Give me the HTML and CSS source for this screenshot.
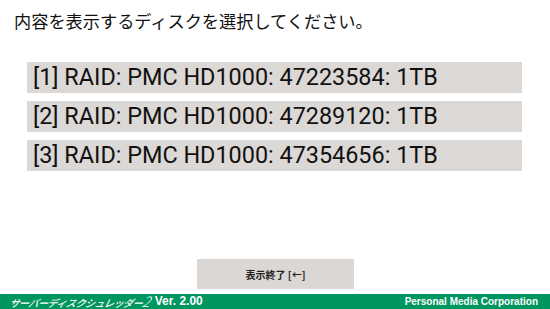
FILE: index.html
```html
<!DOCTYPE html>
<html lang="ja">
<head>
<meta charset="utf-8">
<link rel="stylesheet" href="styles.css">
</head>
<body>
<div class="screen">
  <h1 class="title">内容を表示するディスクを選択してください。</h1>
  <ul class="disks">
    <li class="disk">[1] RAID: PMC HD1000: 47223584: 1TB</li>
    <li class="disk">[2] RAID: PMC HD1000: 47289120: 1TB</li>
    <li class="disk">[3] RAID: PMC HD1000: 47354656: 1TB</li>
  </ul>
  <div class="actions">
    <button class="quit">表示終了 [←]</button>
  </div>
  <footer class="footer">
    <div class="brand">
      <span class="logo">サーバーディスクシュレッダー<span class="logo-num">2</span></span>
      <span class="ver">Ver. 2.00</span>
    </div>
    <div class="company">Personal Media Corporation</div>
  </footer>
</div>
</body>
</html>
```
FILE: styles.css
```css
* { box-sizing: border-box; }
html, body { margin: 0; padding: 0; background: #fff; }
.screen {
  width: 550px;
  height: 309px;
  display: flex;
  flex-direction: column;
  overflow: hidden;
}
.title {
  margin: 9px 0 0 14px;
  font-family: "Noto Sans CJK JP", sans-serif;
  font-weight: 400;
  font-size: 17.2px;
  line-height: 23px;
  color: #111;
}
.disks {
  list-style: none;
  margin: 30px 28px 0 27px;
  padding: 0;
  display: flex;
  flex-direction: column;
  gap: 8px;
}
.disk {
  height: 31px;
  line-height: 31px;
  padding-left: 6px;
  background: #dbd8d5;
  font-family: Roboto, "Liberation Sans", sans-serif;
  font-size: 23.4px;
  color: #111;
  white-space: nowrap;
}
.actions {
  margin-top: auto;
  display: flex;
  justify-content: center;
  padding-left: 1px;
  margin-bottom: 5px;
}
.quit {
  width: 157px;
  height: 30px;
  border: none;
  background: #dad7d4;
  border-radius: 1px;
  font-family: "Noto Sans CJK JP", sans-serif;
  font-size: 10px;
  font-weight: 700;
  color: #222;
  padding: 0;
}
.footer {
  height: 15px;
  background: #00965f;
  color: #fff;
  display: flex;
  align-items: center;
  justify-content: space-between;
  padding: 0 12px 0 10px;
}
.brand {
  display: flex;
  align-items: center;
  gap: 5px;
}
.logo {
  font-family: "Noto Sans CJK JP", sans-serif;
  font-size: 10px;
  font-weight: 500;
  font-style: italic;
  display: inline-block;
  transform: skewX(-14deg);
  letter-spacing: -0.45px;
  line-height: 15px;
}
.logo-num {
  font-family: "Noto Sans CJK JP", sans-serif;
  font-weight: 300;
  font-size: 14px;
  margin-left: 0;
}
.ver {
  font-family: "Liberation Sans", Arial, sans-serif;
  font-weight: 700;
  font-size: 12px;
  line-height: 15px;
}
.company {
  font-family: "Liberation Sans", Arial, sans-serif;
  font-weight: 700;
  font-size: 10px;
  line-height: 15px;
}
```
